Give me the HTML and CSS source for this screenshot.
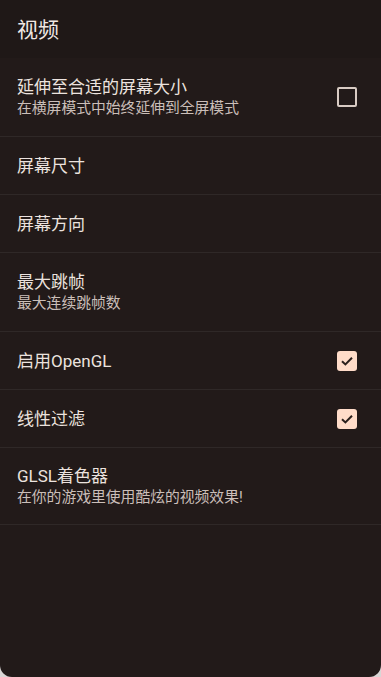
FILE: index.html
```html
<!DOCTYPE html>
<html lang="zh">
<head>
<meta charset="utf-8">
<link rel="stylesheet" href="styles.css">
</head>
<body>
<div class="screen">
  <div class="header">视频</div>
  <div class="list">
    <div class="row tall">
      <div class="texts">
        <div class="title">延伸至合适的屏幕大小</div>
        <div class="sub">在横屏模式中始终延伸到全屏模式</div>
      </div>
      <div class="cb"></div>
    </div>
    <div class="row">
      <div class="texts"><div class="title">屏幕尺寸</div></div>
    </div>
    <div class="row">
      <div class="texts"><div class="title">屏幕方向</div></div>
    </div>
    <div class="row tall">
      <div class="texts">
        <div class="title">最大跳帧</div>
        <div class="sub">最大连续跳帧数</div>
      </div>
    </div>
    <div class="row">
      <div class="texts"><div class="title">启用OpenGL</div></div>
      <div class="cb on"><svg viewBox="0 0 20 20" width="20" height="20"><path d="M5 10.2 L8.4 13.4 L15 6.8" fill="none" stroke="#2a1f1c" stroke-width="2"/></svg></div>
    </div>
    <div class="row">
      <div class="texts"><div class="title">线性过滤</div></div>
      <div class="cb on"><svg viewBox="0 0 20 20" width="20" height="20"><path d="M5 10.2 L8.4 13.4 L15 6.8" fill="none" stroke="#2a1f1c" stroke-width="2"/></svg></div>
    </div>
    <div class="row tall last">
      <div class="texts">
        <div class="title">GLSL着色器</div>
        <div class="sub">在你的游戏里使用酷炫的视频效果!</div>
      </div>
    </div>
  </div>
</div>
</body>
</html>
```

FILE: styles.css
```css
html, body {
  margin: 0;
  padding: 0;
  background: #d9d6d5;
}
.screen {
  width: 381px;
  height: 677px;
  background: #221a19;
  border-radius: 0 0 12px 12px;
  overflow: hidden;
  font-family: Roboto, "Noto Sans CJK SC", sans-serif;
  color: #ece3df;
}
.header {
  height: 58px;
  box-sizing: border-box;
  padding: 15px 0 0 17px;
  font-size: 21px;
  line-height: 30px;
  background: #1f1817;
  color: #f0e8e4;
}
.list {
  display: flex;
  flex-direction: column;
}
.row {
  height: 58px;
  box-sizing: border-box;
  border-bottom: 1px solid #2f2827;
  display: flex;
  align-items: center;
  padding: 0 24px 0 17px;
}
.row.tall {
  height: 79px;
}
.row.last {
  height: 77px;
}
.texts {
  flex: 1;
  display: flex;
  flex-direction: column;
}
.title {
  font-size: 17px;
  line-height: 22px;
  color: #ece3df;
}
.sub {
  font-size: 14.8px;
  line-height: 20px;
  color: #cbbfb9;
}
.cb {
  width: 20px;
  height: 20px;
  box-sizing: border-box;
  border: 2px solid #d8cbc3;
  border-radius: 2px;
  display: flex;
  align-items: center;
  justify-content: center;
}
.cb.on {
  background: #ffdcc9;
  border: none;
  border-radius: 3px;
}
```
